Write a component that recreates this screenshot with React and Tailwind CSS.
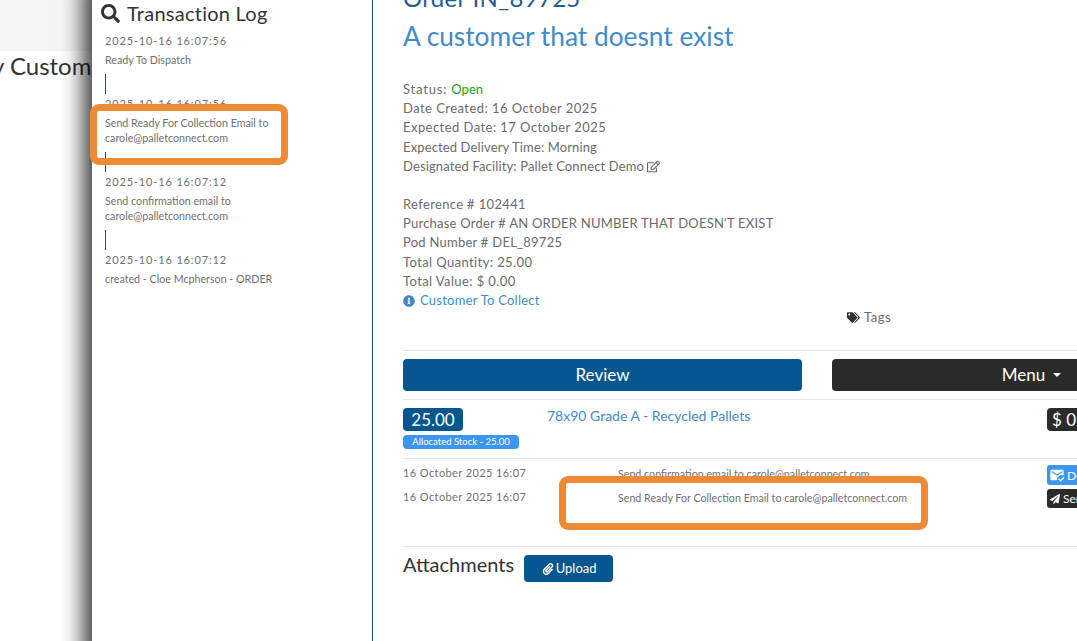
import React from "react";
import { FaSearch, FaRegEdit, FaInfoCircle, FaTags, FaPaperclip, FaPaperPlane } from "react-icons/fa";
import { MdMarkEmailRead } from "react-icons/md";

const font = { fontFamily: "Lato, 'Noto Sans', sans-serif" };

function LogEntry({ time, lines, bar }) {
  return (
    <div className="pl-[13px]">
      <div className="text-[11px] leading-[15px] tracking-[0.85px] text-[#707070]">{time}</div>
      <div className="mt-[4px] text-[10.7px] leading-[15px] text-[#707070]">
        {lines.map((l) => (
          <div key={l}>{l}</div>
        ))}
      </div>
      {bar && <div className="mt-[7px] h-[20px] w-px bg-[#1f4e6e]" />}
    </div>
  );
}

export default function App() {
  return (
    <div className="relative flex h-[641px] w-[1077px] overflow-hidden bg-white" style={font}>
      <div className="w-[92px] shrink-0 overflow-hidden">
        <div className="h-[51px] bg-[#f5f5f5]" />
        <div className="-ml-[8px] whitespace-nowrap text-[24px] leading-[30px] text-[#333]">y Custom</div>
      </div>

      <aside className="z-10 flex w-[281px] shrink-0 flex-col border-r border-[#1f4e6e] bg-white shadow-[13px_0_21px_21px_rgba(0,0,0,0.8)]">
        <div className="flex items-center gap-[7px] pl-[9px] pt-[1px] text-[#333]">
          <FaSearch className="shrink-0 text-[19px]" />
          <span className="text-[20px] leading-[24px] tracking-[0.25px]">Transaction Log</span>
        </div>
        <div className="mt-[8px] flex flex-col gap-[2px]">
          <LogEntry time="2025-10-16 16:07:56" lines={["Ready To Dispatch"]} bar />
          <LogEntry time="2025-10-16 16:07:56" lines={["Send Ready For Collection Email to", "carole@palletconnect.com"]} bar />
          <LogEntry time="2025-10-16 16:07:12" lines={["Send confirmation email to", "carole@palletconnect.com"]} bar />
          <LogEntry time="2025-10-16 16:07:12" lines={["created - Cloe Mcpherson - ORDER"]} />
        </div>
      </aside>

      <main className="relative z-20 min-w-0 flex-1 overflow-hidden bg-white pl-[30px]">
        <div className="-mt-[15px] whitespace-nowrap text-[24px] leading-[26px] tracking-[0.3px] text-[#1f5f8f]">Order IN_89725</div>
        <div className="mt-[9px] whitespace-nowrap text-[26.3px] leading-[32px] text-[#428bca]">A customer that doesnt exist</div>

        <div className="mt-[28px] text-[13px] leading-[19.2px] text-[#6b6b6b]">
          <div><span className="tracking-[0.8px]">Status: </span><span className="text-[#22a016]">Open</span></div>
          <div className="tracking-[0.45px]">Date Created: 16 October 2025</div>
          <div className="tracking-[0.45px]">Expected Date: 17 October 2025</div>
          <div className="tracking-[0.13px]">Expected Delivery Time: Morning</div>
          <div className="flex items-center gap-[3px] tracking-[0.14px]">Designated Facility: Pallet Connect Demo <FaRegEdit className="shrink-0 text-[13px]" /></div>
          <div className="mt-[19px] tracking-[0.35px]">Reference # 102441</div>
          <div className="tracking-[0.23px]">Purchase Order # AN ORDER NUMBER THAT DOESN'T EXIST</div>
          <div className="tracking-[0.25px]">Pod Number # DEL_89725</div>
          <div className="tracking-[0.4px]">Total Quantity: 25.00</div>
          <div className="tracking-[0.4px]">Total Value: $ 0.00</div>
          <div className="flex items-center gap-[5px] tracking-[0.25px] text-[#428bca]"><FaInfoCircle className="shrink-0 text-[12px]" />Customer To Collect</div>
        </div>

        <div className="-mt-[2px] flex items-center gap-[4px] pl-[444px] text-[13px] leading-[19px] tracking-[0.5px] text-[#6b6b6b]">
          <FaTags className="shrink-0 text-[13px] text-[#333]" />Tags
        </div>

        <div className="mt-[23px] w-[704px] border-t border-[#e5e5e5] pt-[8px]">
          <div className="flex gap-[30px]">
            <div className="flex h-[32px] w-[399px] shrink-0 items-center justify-center rounded-[4px] bg-[#04568f] text-[17px] text-white">Review</div>
            <div className="flex h-[32px] w-[399px] shrink-0 items-center justify-center gap-[8px] rounded-[4px] bg-[#2b2b2b] text-[17px] text-white">
              Menu <span className="h-0 w-0 border-x-[4px] border-t-[4px] border-x-transparent border-t-white" />
            </div>
          </div>
        </div>

        <div className="mt-[8px] w-[704px] border-t border-[#e5e5e5] pt-[8px]">
          <div className="flex items-start">
            <div className="w-[144px] shrink-0">
              <div className="flex h-[23px] w-[60px] items-center justify-center rounded-[4px] bg-[#04568f] text-[17px] text-white">25.00</div>
              <div className="mt-[4px] flex h-[14px] w-[116px] items-center justify-center whitespace-nowrap rounded-[4px] bg-[#3d96ee] text-[9.5px] text-white">Allocated Stock - 25.00</div>
            </div>
            <div className="w-[500px] shrink-0 text-[14px] leading-[15px] text-[#428bca]">78x90 Grade A - Recycled Pallets</div>
            <div className="flex h-[23px] w-[60px] shrink-0 items-center whitespace-nowrap rounded-[4px] bg-[#2b2b2b] pl-[5px] text-[17px] text-white">$ 0.00</div>
          </div>
        </div>

        <div className="mt-[9px] w-[704px] border-t border-[#e5e5e5] pt-[6px] text-[11px] text-[#707070]">
          <div className="flex h-[24px] items-start leading-[15px]">
            <div className="w-[215px] shrink-0 tracking-[0.4px]">16 October 2025 16:07</div>
            <div className="w-[429px] shrink-0 pt-[1px] text-[10.7px]">Send confirmation email to carole@palletconnect.com</div>
            <div className="flex h-[20px] w-[70px] shrink-0 items-center gap-[2px] whitespace-nowrap rounded-[3px] bg-[#3d96ee] pl-[2px] text-[12px] text-white"><MdMarkEmailRead className="shrink-0 text-[16px]" />Delivered</div>
          </div>
          <div className="flex h-[24px] items-start leading-[15px]">
            <div className="w-[215px] shrink-0 tracking-[0.4px]">16 October 2025 16:07</div>
            <div className="w-[429px] shrink-0 pt-[1px] text-[10.7px]">Send Ready For Collection Email to carole@palletconnect.com</div>
            <div className="flex h-[19px] w-[70px] shrink-0 items-center gap-[3px] whitespace-nowrap rounded-[3px] bg-[#2b2b2b] pl-[3px] text-[12px] text-white"><FaPaperPlane className="shrink-0 text-[10px]" />Send</div>
          </div>
        </div>

        <div className="mt-[33px] flex w-[704px] items-start gap-[10px] border-t border-[#e5e5e5] pt-[8px]">
          <span className="text-[20px] leading-[19px] text-[#333]">Attachments</span>
          <div className="flex h-[27px] w-[89px] shrink-0 items-center justify-center gap-[2px] rounded-[4px] bg-[#04568f] pl-[1px] text-[13px] text-white"><FaPaperclip className="shrink-0 text-[12px]" />Upload</div>
        </div>
      </main>

      <div className="pointer-events-none absolute left-[90px] top-[104px] z-30 h-[61px] w-[198px] rounded-[9px] border-[7px] border-[#ee8a36]" />
      <div className="pointer-events-none absolute left-[559px] top-[476px] z-30 h-[54px] w-[369px] rounded-[9px] border-[7px] border-[#ee8a36]" />
    </div>
  );
}
